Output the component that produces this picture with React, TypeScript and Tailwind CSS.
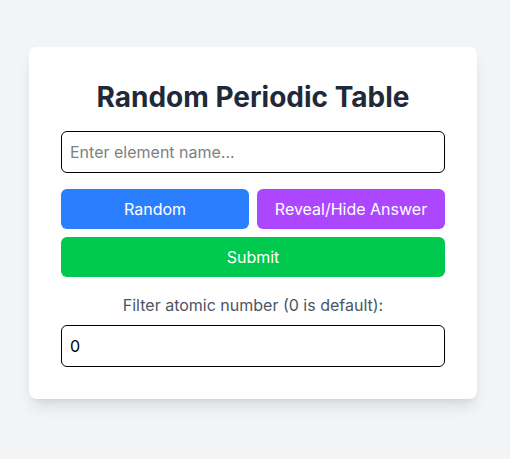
export default function App() {
  return (
    <div className="min-h-screen bg-[#f3f4f6] flex justify-center items-start pt-[47px] pr-[4px]" style={{ fontFamily: "Inter, 'Liberation Sans', sans-serif" }}>
      <div className="w-[448px] bg-white rounded-lg shadow-lg p-8 flex flex-col">
        <h1 className="text-[28px] leading-9 font-bold text-center text-[#1e2939] mb-4">Random Periodic Table</h1>
        <input
          type="text"
          placeholder="Enter element name..."
          className="w-full border border-black rounded-md p-2 text-base mb-4 placeholder:text-[#808080] outline-none"
        />
        <div className="flex gap-2 mb-2">
          <button className="flex-1 bg-[#2b7fff] text-white rounded-md py-2 text-base">Random</button>
          <button className="flex-1 bg-[#ad46ff] text-white rounded-md py-2 text-base">Reveal/Hide Answer</button>
        </div>
        <button className="w-full bg-[#00c950] text-white rounded-md py-2 text-base mb-4">Submit</button>
        <label className="text-center text-[#4a5565] text-base mb-2">Filter atomic number (0 is default):</label>
        <input
          type="number"
          defaultValue={0}
          className="w-full border border-black rounded-md p-2 text-base outline-none text-black"
        />
      </div>
    </div>
  );
}
